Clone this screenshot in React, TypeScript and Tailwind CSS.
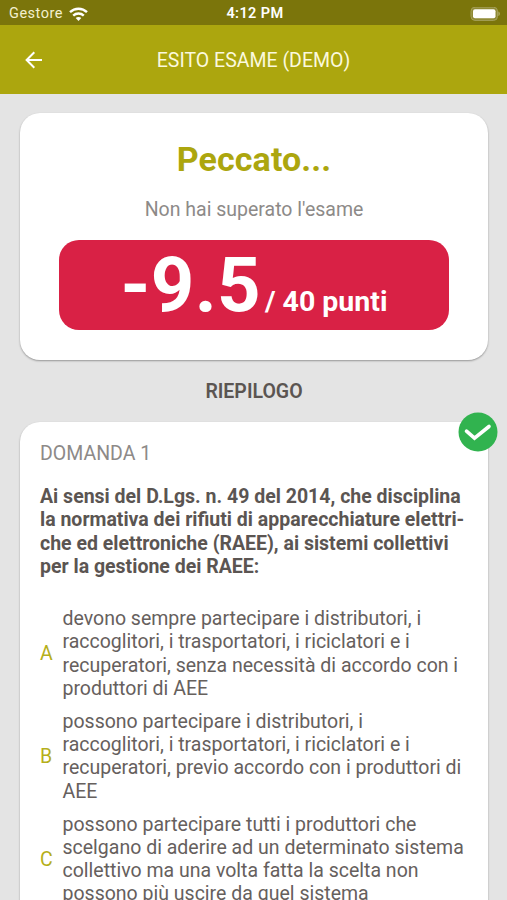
import React from "react";

const answers = [
  {
    letter: "A",
    lines: [
      "devono sempre partecipare i distributori, i",
      "raccoglitori, i trasportatori, i riciclatori e i",
      "recuperatori, senza necessità di accordo con i",
      "produttori di AEE",
    ],
  },
  {
    letter: "B",
    lines: [
      "possono partecipare i distributori, i",
      "raccoglitori, i trasportatori, i riciclatori e i",
      "recuperatori, previo accordo con i produttori di",
      "AEE",
    ],
  },
  {
    letter: "C",
    lines: [
      "possono partecipare tutti i produttori che",
      "scelgano di aderire ad un determinato sistema",
      "collettivo ma una volta fatta la scelta non",
      "possono più uscire da quel sistema",
    ],
  },
];

const question = [
  "Ai sensi del D.Lgs. n. 49 del 2014, che disciplina",
  "la normativa dei rifiuti di apparecchiature elettri-",
  "che ed elettroniche (RAEE), ai sistemi collettivi",
  "per la gestione dei RAEE:",
];

function StatusBar() {
  return (
    <div className="grid h-[25px] shrink-0 grid-cols-3 items-center bg-[#7b750b] pt-[3px] pr-[6px] pl-[9px] text-white">
      <div className="flex items-center gap-[6px]">
        <span className="pt-px text-[14.5px] leading-none tracking-[0.5px] text-[#f3f0cf]">Gestore</span>
        <svg width="19" height="15" viewBox="0 0 19 15" fill="none" stroke="#fff" strokeWidth="2.4">
          <path d="M1 5.2C5.8.6 13.2.6 18 5.2" />
          <path d="M4.2 8.6c3-2.8 7.6-2.8 10.6 0" />
          <path d="M6.7 11.1c1.6-1.5 4-1.5 5.6 0L9.5 14z" fill="#fff" stroke="none" />
        </svg>
      </div>
      <span className="pt-px text-center text-[14.5px] leading-none font-semibold tracking-[0.4px] whitespace-nowrap">4:12 PM</span>
      <svg className="justify-self-end" width="31" height="15" viewBox="0 0 31 15">
        <rect x="1" y="0.2" width="26.5" height="13.2" rx="4" fill="#8f8a35" stroke="#a5a05a" strokeWidth="1" />
        <rect x="3" y="2.3" width="22.5" height="9" rx="2" fill="#fff" />
        <path d="M28.5 4.500v4.600c1.600-.6 1.600-4 0-4.600z" fill="#c0bc7e" />
      </svg>
    </div>
  );
}

function Header() {
  return (
    <header className="grid h-[69px] shrink-0 grid-cols-[66px_1fr_66px] items-center bg-[#aca60e] text-white">
      <button className="flex justify-center pl-px" aria-label="Indietro">
        <svg width="18" height="18" viewBox="0 0 18 18" fill="none" stroke="#fff" strokeWidth="2">
          <path d="M17 9H2M9.300 1.300 1.600 9l7.700 7.700" />
        </svg>
      </button>
      <h1 className="pt-[2px] text-center text-[19.5px] leading-none whitespace-nowrap text-[#fbf9dd]">ESITO ESAME (DEMO)</h1>
    </header>
  );
}

function ScoreCard() {
  return (
    <section className="flex h-[247px] shrink-0 flex-col items-center rounded-[20px] bg-white px-[39px] pt-[26px] shadow-[0_1px_2px_rgba(0,0,0,0.35)]">
      <h2 className="text-[34px] leading-[41px] font-bold tracking-[0.1px] text-[#aca60e]">Peccato...</h2>
      <p className="mt-[18px] text-[19.5px] leading-[23px] text-[#8d8a88]">Non hai superato l'esame</p>
      <div className="mt-[19px] flex h-[90px] w-full items-baseline justify-center rounded-[20px] bg-[#d92145] font-bold whitespace-nowrap text-white">
        <span className="text-[76px] leading-[90px] tracking-[0.3px]">-9.5</span>
        <span className="ml-1 text-[28.5px]">/ 40 punti</span>
      </div>
    </section>
  );
}

function QuestionCard() {
  return (
    <section className="relative mt-[19px] h-[520px] shrink-0 rounded-[20px] bg-white px-[20px] pt-[20px] shadow-[0_1px_2px_rgba(0,0,0,0.35)]">
      <svg className="absolute -top-[10px] -right-[10px]" width="40" height="40" viewBox="0 0 40 40">
        <circle cx="20" cy="20" r="19.500" fill="#31b34f" />
        <path d="m8.500 19.200 8 7L31 14.500" fill="none" stroke="#fff" strokeWidth="3.600" strokeLinecap="round" />
      </svg>
      <p className="text-[19.5px] leading-[23px] text-[#8d8a88]">DOMANDA 1</p>
      <h3 className="mt-[20px] text-[19.5px] leading-[23.3px] font-bold whitespace-nowrap text-[#5b5552]">
        {question.map((line) => (
          <span key={line} className="block">{line}</span>
        ))}
      </h3>
      <div className="mt-[29px] flex flex-col gap-[9.500px]">
        {answers.map((answer) => (
          <div key={answer.letter} className="flex items-center">
            <span className="w-[22.5px] shrink-0 text-[19.5px] leading-[23px] text-[#b5af1b]">{answer.letter}</span>
            <p className="text-[19.5px] leading-[23.300px] whitespace-nowrap text-[#66605d]">
              {answer.lines.map((line) => (
                <span key={line} className="block">{line}</span>
              ))}
            </p>
          </div>
        ))}
      </div>
    </section>
  );
}

export default function App() {
  return (
    <div className="flex h-screen flex-col overflow-hidden bg-[#e4e4e4] font-['Roboto',sans-serif]">
      <StatusBar />
      <Header />
      <main className="flex flex-1 flex-col overflow-hidden pt-[19px] pr-[19px] pl-[20px]">
        <ScoreCard />
        <h2 className="mt-[20px] text-center text-[19.5px] leading-[23px] font-semibold text-[#5b5552]">RIEPILOGO</h2>
        <QuestionCard />
      </main>
    </div>
  );
}
